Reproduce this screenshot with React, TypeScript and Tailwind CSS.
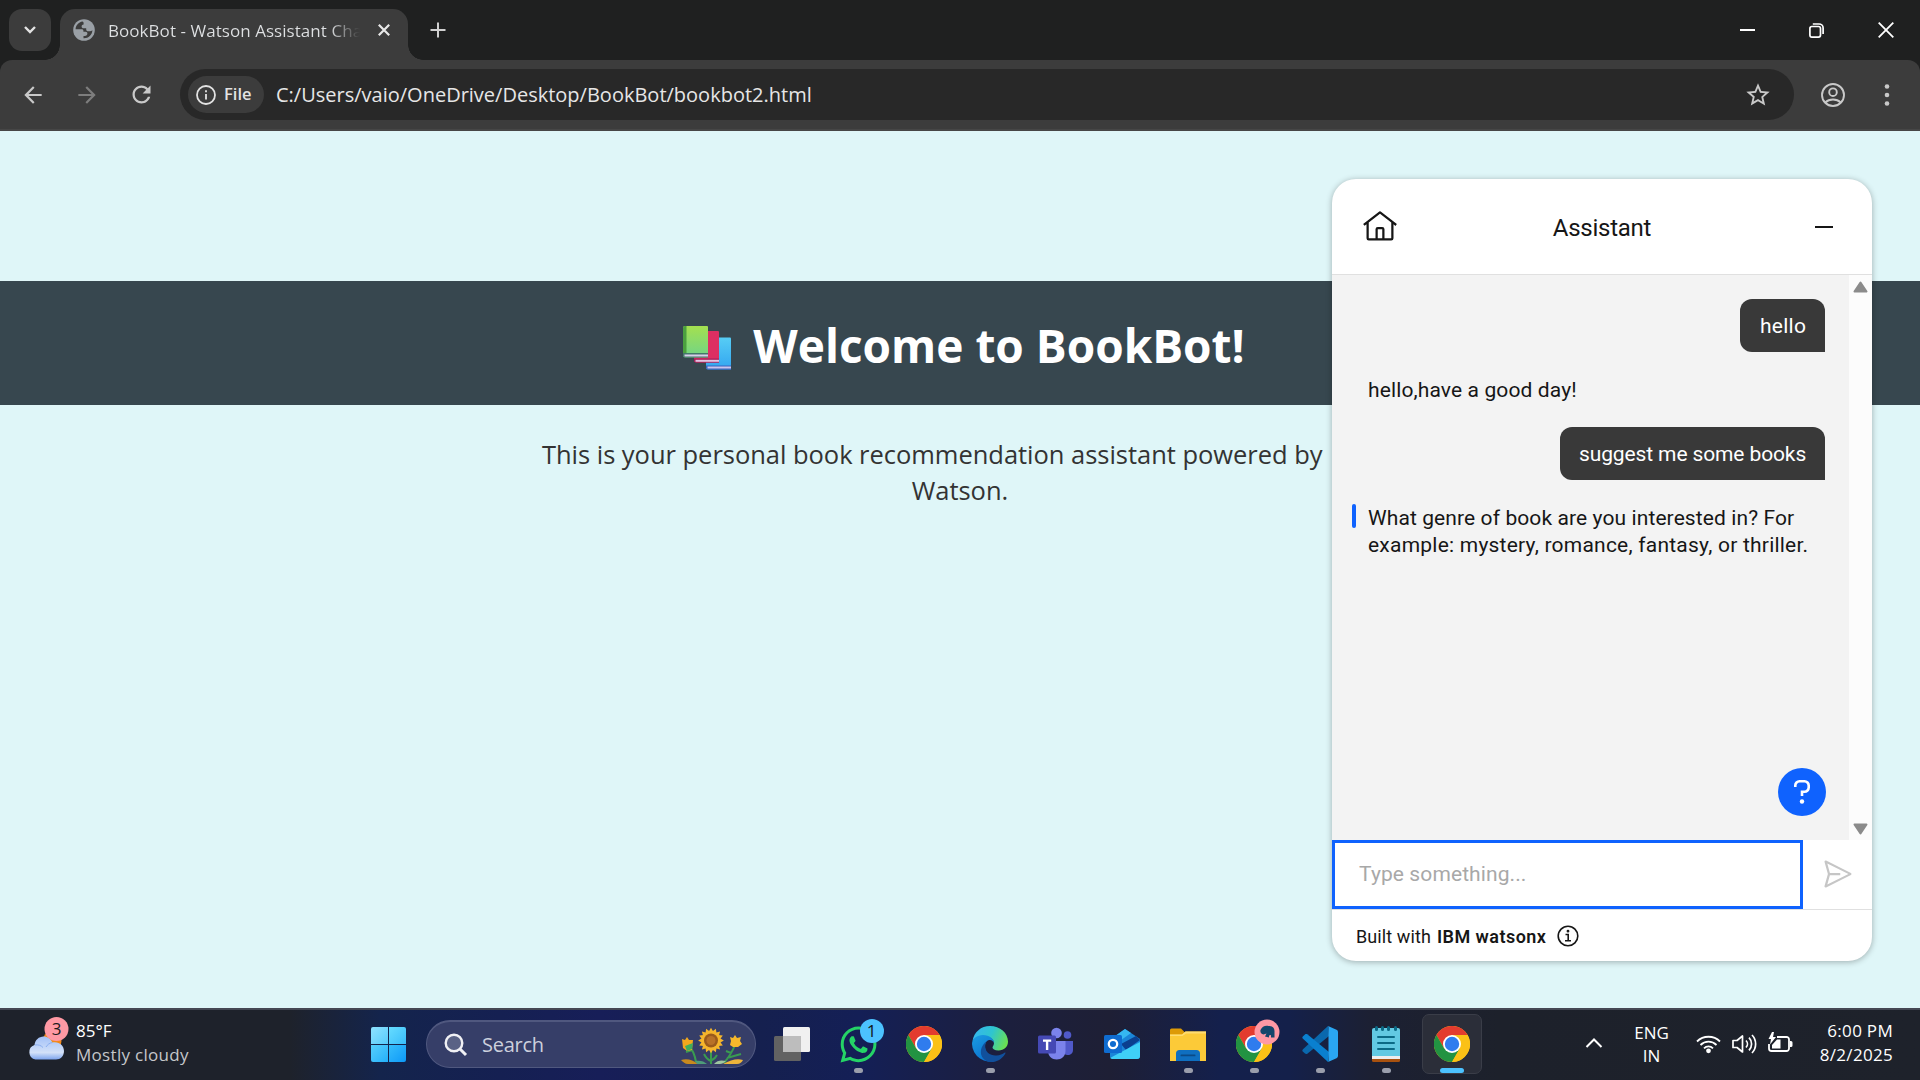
import React from "react";
import { FaWhatsapp } from "react-icons/fa";

function Globe() {
  return (
    <svg width="22" height="22" viewBox="0 0 22 22" className="shrink-0">
      <circle cx="11" cy="11" r="10.8" fill="#9aa0a6" />
      <path
        d="M9.5 2.6C5.6 3.2 2.7 6.5 2.6 10.3h6.2c.9 0 1.6.6 1.6 1.5v1h2.300c1.100 0 1.700.7 1.700 1.700 0 1.600-1 2.500-2.600 2.500H10.500v2.300c4.700.3 8.700-3.300 8.900-8-.8.7-1.500 1-2.500 1h-1.600c-1.300 0-2.100-.8-2.100-2.100v-.9H10.600C9.300 9.300 8.600 8.600 8.600 7.500c0-1.300.8-2 2-2V4c0-.7-.4-1.200-1.100-1.400z"
        fill="#3c3c3c"
      />
    </svg>
  );
}

function ChromeLogo() {
  return (
    <svg width="36" height="36" viewBox="0 0 36 36">
      <circle cx="18" cy="18" r="18" fill="#fbc116" />
      <path d="M2.400 9A18 18 0 0 1 33.600 9H18L10.200 22.500z" fill="#e33b2e" />
      <path d="M2.400 9A18 18 0 0 0 18 36L25.800 22.500H10.200z" fill="#229342" />
      <path d="M33.600 9A18 18 0 0 1 18 36L25.800 22.500 18 9z" fill="#fbc116" />
      <circle cx="18" cy="18" r="9" fill="#fff" />
      <circle cx="18" cy="18" r="7.200" fill="#2f7cee" />
    </svg>
  );
}

function EdgeLogo() {
  return (
    <svg width="36" height="36" viewBox="0 0 36 36">
      <defs>
        <linearGradient id="eTop" x1="0" y1=".3" x2="1" y2=".6">
          <stop offset="0" stopColor="#35b6ee" />
          <stop offset=".5" stopColor="#2fc5cf" />
          <stop offset="1" stopColor="#6be04f" />
        </linearGradient>
        <linearGradient id="eLeft" x1="0" y1="0" x2=".6" y2="1">
          <stop offset="0" stopColor="#1b9de2" />
          <stop offset="1" stopColor="#0a70cf" />
        </linearGradient>
      </defs>
      <path d="M0.500 15C2 6 9 0 18 0c10 0 18 7 18 15.500 0 5.500-4 9-9.500 9-4 0-6-1.500-6-3 0-1 1.500-2 1.500-4.500 0-3.500-4-6.500-9-6.500C7.500 10.500 2.500 12 0.500 15z" fill="url(#eTop)" />
      <path d="M0 18c0-5.500 5-9 11-9 6.500 0 11 4 11 8-1-2.500-3-3.500-5-3-3.500 1-5 5-3.500 10 1.500 5.500 5.500 9.500 11 10.300A18 18 0 0 1 0 18z" fill="url(#eLeft)" />
      <path d="M13.200 20c-.3 6 5.300 10 11.300 9.500 3.500-.3 6-1.500 8-2.800 1-.5 1.200.3.700 1C30 33 25 36 19.500 36 12 36 8 30 9 24c.5-3.500 3-7 6-9-1.200 1.300-1.700 3-1.800 5z" fill="#11509c" />
    </svg>
  );
}

function TeamsLogo() {
  return (
    <svg width="36" height="34" viewBox="0 0 36 34">
      <circle cx="29.500" cy="8" r="3.800" fill="#5059c9" />
      <path d="M25 14h10v9c0 3.500-2.500 5-5 5s-5-1-5-5z" fill="#5059c9" />
      <circle cx="18.500" cy="6" r="5.300" fill="#7b83eb" />
      <path d="M10 14h17.500v10c0 5-4 8.500-8.800 8.500S10 29 10 24z" fill="#7b83eb" />
      <rect x="0" y="8.500" width="18" height="18" rx="1.500" fill="#4549b4" />
      <path d="M5 12.500h8.200v2.200h-2.900V23H7.900v-8.300H5z" fill="#fff" />
    </svg>
  );
}

function OutlookLogo() {
  return (
    <svg width="36" height="32" viewBox="0 0 36 32">
      <path d="M6 12L21 1l15 10v17a3 3 0 0 1-3 3H9a3 3 0 0 1-3-3z" fill="#1a86d8" />
      <path d="M11 8L21 1l6 4-14 10z" fill="#35b8f1" />
      <path d="M17 16L32 8l4 4-14 10z" fill="#0b3f8f" />
      <path d="M6 30L36 14v14a3 3 0 0 1-3 3H8z" fill="#3fd0f7" />
      <rect x="0" y="7" width="18" height="18" rx="1.500" fill="#0f6cd0" />
      <circle cx="9" cy="16" r="4.200" fill="none" stroke="#fff" strokeWidth="2.300" />
    </svg>
  );
}

function FolderLogo() {
  return (
    <svg width="36" height="33" viewBox="0 0 36 33">
      <path d="M0 2a1.500 1.500 0 0 1 1.500-1.500H11l4 4V9H0z" fill="#dd9a06" />
      <path d="M0 6.500h12l3.500-3H36V33H0z" fill="#fcca38" />
      <path d="M0 6.500h12l3.500-3H36v2H16l-3.500 2.500H0z" fill="#ffdc70" />
      <path d="M6 33v-7.500A3.500 3.500 0 0 1 9.500 22h17a3.500 3.500 0 0 1 3.500 3.500V33z" fill="#0f6fc0" />
      <rect x="10.500" y="26.500" width="15" height="1.800" rx=".9" fill="#0b4a86" />
    </svg>
  );
}

function CodeLogo() {
  return (
    <svg width="36" height="36" viewBox="0 0 36 36">
      <path d="M26 0L1 23.200a1.800 1.800 0 0 0 0 2.600l2 1.800c.7.600 1.600.6 2.300.1L27 10z" fill="#0a68ad" />
      <path d="M26 36L1 12.800a1.800 1.800 0 0 1 0-2.600l2-1.800c.7-.6 1.600-.6 2.300-.1L27 26z" fill="#0a80cf" />
      <path d="M26 0l8.500 3.800A2.500 2.500 0 0 1 36 6v24a2.500 2.500 0 0 1-1.500 2.200L26 36c.6-.5.500-1.300.5-2V2c0-.7 0-1.500-.5-2z" fill="#2aa6f2" />
    </svg>
  );
}

function NotepadLogo() {
  return (
    <svg width="28" height="36" viewBox="0 0 28 36">
      <rect x="0" y="28" width="28" height="8" rx="1.500" fill="#a8510f" />
      <rect x="0" y="27" width="28" height="6" fill="#ededed" />
      <path d="M0 4a2 2 0 0 1 2-2h24a2 2 0 0 1 2 2v26H0z" fill="#62c9e2" />
      {[3, 9, 15, 22].map((x) => (
        <rect key={x} x={x} y="0" width="3" height="5" rx="1.500" fill="#0b6a86" />
      ))}
      {[10, 16, 22].map((y) => (
        <rect key={y} x="5" y={y} width="18" height="2" rx="1" fill="#0b6a86" />
      ))}
    </svg>
  );
}

function TaskViewLogo() {
  return (
    <svg width="36" height="34" viewBox="0 0 36 34">
      <rect x="0" y="9" width="27" height="25" rx="1.500" fill="#626262" />
      <rect x="9" y="0" width="27" height="25" rx="1.500" fill="#f0f0f0" />
      <rect x="9" y="9" width="18" height="16" fill="#bdbdbd" />
    </svg>
  );
}

function WeatherIcon() {
  return (
    <svg width="42" height="44" viewBox="0 0 42 44">
      <defs>
        <linearGradient id="cloud" x1="0" y1="0" x2="0" y2="1">
          <stop offset="0" stopColor="#a3c1f8" />
          <stop offset=".7" stopColor="#d3e1f8" />
          <stop offset="1" stopColor="#7ea5ee" />
        </linearGradient>
      </defs>
      <circle cx="25" cy="24" r="9.500" fill="#f28a1c" />
      <path d="M8.500 42.500a7.500 7.500 0 0 1-1-14.500C8 23 12 19.500 16.500 19.500c4 0 7.500 2.500 8.800 6C31.500 24 37 28 37 34c0 5-3.500 8.500-8 8.500z" fill="url(#cloud)" />
      <path d="M8 28c3-.6 6 .3 8 2.500M19 30c1.500-2.500 3.500-4 6.300-4.500" stroke="#8aaef0" strokeWidth="1" fill="none" />
      <circle cx="29.500" cy="12" r="12" fill="#ff99a4" />
      <text x="29.500" y="18" textAnchor="middle" fontSize="17" fill="#1c1c1c" fontFamily="Open Sans, sans-serif">3</text>
    </svg>
  );
}

function Sunflowers() {
  return (
    <svg width="62" height="38" viewBox="0 0 62 38">
      <path d="M30 24v13M30 34c-3-1-5-3-7-7M31 33c2-1 4-3 5-5M8 19c4 4 6 10 7 16M54 18c-2 5-6 12-11 18M11 23l-6 2M46 31l14-4M50 26l-5-2" stroke="#3a9b50" strokeWidth="2" fill="none" />
      <path d="M0 33c6-2 12 0 17 4H7c-3 0-5-2-7-4z" fill="#c98a1e" />
      <path d="M62 33c-6-2-12 0-20 4h14c3 0 5-2 6-4z" fill="#edb43a" />
      <path d="M14 34c5-1 9 0 12 3H16z" fill="#4e9c79" />
      <path d="M33 37c3-4 8-4 12-3-2 2-4 3-6 3z" fill="#9fc6a0" />
      <path d="M1 12l3 1 2-3 2 3 4 0-1 10-5 1-4-3z" fill="#f2a81d" />
      <path d="M4 19l8-3-1 6-5 2z" fill="#3fae5c" />
      <path d="M49 10l3 1 2-3 2 3 4-1-1 4 2 3-4 3H52l-3-2 1-4z" fill="#f7b92b" />
      <g transform="translate(30 13.500)">
        {[0, 22.5, 45, 67.5, 90, 112.5, 135, 157.5].map((a) => (
          <path key={a} transform={`rotate(${a})`} d="M0-12.800L3.400-7V7L0 12.800-3.400 7V-7z" fill="#f5b52c" />
        ))}
        <circle r="7" fill="#9a5a1c" />
        <circle r="4.500" fill="#b87128" />
      </g>
    </svg>
  );
}

function Books() {
  return (
    <svg width="50" height="44" viewBox="0 0 50 44">
      <defs>
        <linearGradient id="green" x1="0" y1="0" x2="0" y2="1">
          <stop offset="0" stopColor="#a4e04f" />
          <stop offset="1" stopColor="#70d488" />
        </linearGradient>
        <linearGradient id="blue" x1="0" y1="0" x2="0" y2="1">
          <stop offset="0" stopColor="#57cdf5" />
          <stop offset="1" stopColor="#32a5f0" />
        </linearGradient>
      </defs>
      <path d="M23 13a1.500 1.500 0 0 1 1.500-1.500H47a1 1 0 0 1 1 1V43.500H25a2 2 0 0 1-2-2z" fill="url(#blue)" />
      <path d="M23 39.500h25v4H25a2 2 0 0 1-2-2z" fill="#3b62bf" />
      <rect x="24.500" y="40.500" width="23.500" height="2" fill="#c9c4ec" />
      <path d="M11 7a2 2 0 0 1 2-2h22a1 1 0 0 1 1 1v30.500H13.500A2.500 2.500 0 0 1 11 34z" fill="#dd2f62" />
      <path d="M11 32.500h25v4H13.500A2.500 2.500 0 0 1 11 34z" fill="#a81d58" />
      <rect x="12.500" y="33.800" width="23.500" height="2" fill="#e3c4e4" />
      <path d="M0 2a2 2 0 0 1 2-2h22a1 1 0 0 1 1 1v30.500H2.500A2.500 2.500 0 0 1 0 29z" fill="url(#green)" />
      <path d="M0 2a2 2 0 0 1 2-2h1.500v28H0z" fill="#4ba03f" />
      <path d="M0 27h25v4.500H2.500A2.500 2.500 0 0 1 0 29z" fill="#44786a" />
      <rect x="1.500" y="28.500" width="23.500" height="2" fill="#d9cdea" />
    </svg>
  );
}

function BrowserChrome() {
  return (
    <header className="flex h-[131px] flex-col bg-[#1f2020]">
      <div className="flex h-[60px] items-stretch">
        <div className="flex w-[60px] flex-col">
          <button className="mt-[9px] ml-[9px] flex h-[42px] w-[42px] shrink-0 items-center justify-center rounded-[13px] bg-[#3c3c3c]">
            <svg width="12" height="8" viewBox="0 0 12 8"><path d="M1 1l5 5 5-5" fill="none" stroke="#e3e3e3" strokeWidth="2.400" /></svg>
          </button>
        </div>
        <div className="relative mt-[9px] flex w-[348px] items-center rounded-t-[15px] bg-[#3c3c3c] pr-[18px] pb-[9px] pl-[13px]">
          <span className="absolute bottom-0 -left-[15px] h-[15px] w-[15px] bg-[radial-gradient(circle_at_0_0,transparent_14.5px,#3c3c3c_15px)]" />
          <span className="absolute -right-[15px] bottom-0 h-[15px] w-[15px] bg-[radial-gradient(circle_at_100%_0,transparent_14.5px,#3c3c3c_15px)]" />
          <Globe />
          <span className="mt-[2px] ml-[13px] w-[252px] overflow-hidden bg-gradient-to-r from-[#dfe1e3] from-88% to-[#3c3c3c] to-100% bg-clip-text text-[17px] tracking-[0.050px] whitespace-nowrap text-transparent">
            BookBot - Watson Assistant Cha
          </span>
          <svg width="12" height="12" viewBox="0 0 12 12" className="ml-auto"><path d="M.8.8l10.400 10.400M11.200.8L.8 11.200" stroke="#e8e8e8" strokeWidth="2.200" /></svg>
        </div>
        <div className="flex w-[60px] items-center justify-center">
          <svg width="16" height="16" viewBox="0 0 16 16"><path d="M8 .5v15M.5 8h15" stroke="#d0d0d0" strokeWidth="2" /></svg>
        </div>
        <div className="ml-auto flex items-center">
          <div className="flex w-[69px] justify-center">
            <svg width="15" height="15" viewBox="0 0 15 15"><path d="M0 7h15" stroke="#fff" strokeWidth="2" /></svg>
          </div>
          <div className="flex w-[69px] justify-center">
            <svg width="15" height="15" viewBox="0 0 15 15" fill="none" stroke="#fff" strokeWidth="1.700">
              <rect x=".9" y="3.500" width="10.600" height="10.600" rx="2" />
              <path d="M3.800 1H10a4.100 4.100 0 0 1 4.100 4.100V11" />
            </svg>
          </div>
          <div className="flex w-[69px] justify-center">
            <svg width="16" height="16" viewBox="0 0 16 16"><path d="M.7.7l14.600 14.600M15.300.7L.7 15.300" stroke="#fff" strokeWidth="1.800" /></svg>
          </div>
        </div>
      </div>

      <div className="flex h-[71px] items-start rounded-t-[12px] border-b-2 border-[#464646] bg-[#3c3c3c] pt-[9px]">
        <div className="flex h-[51px] w-[180px] items-center pl-[6px]">
          <div className="flex w-[54px] justify-center">
            <svg width="26" height="26" viewBox="0 0 24 24" fill="#c9c9c9"><path d="M20 11H7.830l5.590-5.590L12 4l-8 8 8 8 1.410-1.410L7.830 13H20v-2z" /></svg>
          </div>
          <div className="flex w-[54px] justify-center">
            <svg width="26" height="26" viewBox="0 0 24 24" fill="#7d7d7d"><path d="M4 11h12.170l-5.590-5.590L12 4l8 8-8 8-1.410-1.410L16.170 13H4v-2z" /></svg>
          </div>
          <div className="flex w-[54px] justify-center">
            <svg width="27" height="27" viewBox="0 0 24 24" fill="#c9c9c9"><path d="M17.650 6.350C16.200 4.900 14.210 4 12 4c-4.420 0-7.990 3.580-7.990 8s3.570 8 7.990 8c3.730 0 6.840-2.550 7.730-6h-2.080c-.82 2.330-3.040 4-5.650 4-3.310 0-6-2.690-6-6s2.690-6 6-6c1.660 0 3.140.69 4.220 1.780L13 11h7V4l-2.350 2.350z" /></svg>
          </div>
        </div>
        <div className="flex h-[51px] w-[1614px] items-center rounded-full bg-[#282828] pl-2">
          <div className="flex h-[37px] w-[76px] items-center rounded-full bg-[#3c3c3c] pl-2">
            <svg width="20" height="20" viewBox="0 0 20 20" fill="none" stroke="#e3e3e3" strokeWidth="1.800">
              <circle cx="10" cy="10" r="9" />
              <path d="M10 9v5.500M10 5.300v2" />
            </svg>
            <span className="ml-2 text-[16.500px] font-semibold text-[#e3e3e3]">File</span>
          </div>
          <span className="ml-[12px] text-[20px] text-[#e6e6e6]">C:/Users/vaio/OneDrive/Desktop/BookBot/bookbot2.html</span>
          <svg width="28" height="28" viewBox="0 0 24 24" fill="#c9c9c9" className="mr-[22px] ml-auto"><path d="M22 9.240l-7.190-.62L12 2 9.190 8.630 2 9.240l5.460 4.730L5.820 21 12 17.270 18.180 21l-1.630-7.030L22 9.240zM12 15.400l-3.760 2.270 1-4.280-3.320-2.880 4.380-.38L12 6.100l1.710 4.040 4.380.38-3.320 2.880 1 4.280L12 15.400z" /></svg>
        </div>
        <div className="flex h-[51px] flex-1 items-center pl-[27px]">
          <svg width="24" height="24" viewBox="0 0 24 24" fill="none" stroke="#c9c9c9" strokeWidth="1.900">
            <circle cx="12" cy="12" r="11" />
            <circle cx="12" cy="9.200" r="3.800" />
            <path d="M4.300 19.500c2-2 4.800-3 7.700-3s5.700 1 7.700 3" />
          </svg>
          <svg width="6" height="24" viewBox="0 0 6 24" fill="#c9c9c9" className="ml-[39px]">
            <circle cx="3" cy="3.500" r="2.300" /><circle cx="3" cy="12" r="2.300" /><circle cx="3" cy="20.500" r="2.300" />
          </svg>
        </div>
      </div>
    </header>
  );
}

function ChatWidget() {
  return (
    <section className="absolute top-[48px] left-[1332px] flex h-[782px] w-[540px] flex-col overflow-hidden rounded-[24px] bg-white font-[Roboto,sans-serif] text-[#161616] shadow-[0_1px_6px_rgba(0,0,0,0.3)]">
      <div className="flex h-[96px] shrink-0 items-center border-b border-[#e0e0e0] pr-[39px] pl-[30px]">
        <svg width="36" height="36" viewBox="0 0 32 32" fill="#161616"><path d="M16.612 2.214a1.010 1.010 0 0 0-1.243 0L1 13.419l1.243 1.572L4 13.621V26a2.004 2.004 0 0 0 2 2H26a2.004 2.004 0 0 0 2-2V13.630L29.757 15 31 13.428zM18 26H14V18h4zm2 0V18a2.002 2.002 0 0 0-2-2H14a2.002 2.002 0 0 0-2 2v8H6V12.062l10-7.790 10 7.800V26z" /></svg>
        <h2 className="flex-1 pt-[2px] pr-[9px] text-center text-[24px] tracking-[-0.250px]">Assistant</h2>
        <span className="h-[2px] w-[18px] bg-[#161616]" />
      </div>
      <div className="flex min-h-0 flex-1">
        <div className="relative w-[517px] bg-[#f3f3f3] pt-[24px] pr-[24px] text-[21px] leading-[27px]">
          <div className="flex justify-end">
            <p className="w-[85px] rounded-[12px] rounded-br-none bg-[#393939] pt-[14px] pb-[12px] pl-[20px] tracking-[0.250px] text-white">hello</p>
          </div>
          <p className="mt-[25px] pl-[36px] tracking-[0.120px]">hello,have a good day!</p>
          <div className="mt-[23px] flex justify-end">
            <p className="w-[265px] rounded-[12px] rounded-br-none bg-[#393939] pt-[14px] pb-[12px] pl-[19px] tracking-[-0.120px] whitespace-nowrap text-white">suggest me some books</p>
          </div>
          <div className="mt-[24px] flex">
            <span className="ml-[20px] h-[24px] w-[4px] rounded-full bg-[#0f62fe]" />
            <p className="mt-px ml-[12px] whitespace-nowrap">
              <span className="block tracking-[0.100px]">What genre of book are you interested in? For</span>
              <span className="block tracking-[0.225px]">example: mystery, romance, fantasy, or thriller.</span>
            </p>
          </div>
          <button className="absolute right-[23px] bottom-[24px] flex h-[48px] w-[48px] items-center justify-center rounded-full bg-[#0f62fe]">
            <svg width="16" height="24" viewBox="0 0 16 24" fill="none">
              <path d="M1.300 7V5.500A4.200 4.200 0 0 1 5.500 1.300h5A4.200 4.200 0 0 1 14.700 5.500v2A4.200 4.200 0 0 1 10.500 11.700H8V16" stroke="#fff" strokeWidth="2.600" />
              <circle cx="8" cy="21.500" r="2.200" fill="#fff" />
            </svg>
          </button>
        </div>
        <div className="flex flex-1 flex-col items-center justify-between bg-[#fcfcfc] pt-[6px] pb-[5px]">
          <svg width="15" height="12" viewBox="0 0 15 12"><path d="M7.500 1.500L13.500 10.500H1.500z" fill="#8b8b8b" stroke="#8b8b8b" strokeWidth="2" strokeLinejoin="round" /></svg>
          <svg width="15" height="12" viewBox="0 0 15 12"><path d="M7.500 10.500L13.500 1.500H1.500z" fill="#8b8b8b" stroke="#8b8b8b" strokeWidth="2" strokeLinejoin="round" /></svg>
        </div>
      </div>
      <div className="flex h-[70px] shrink-0 border-b border-[#e0e0e0]">
        <div className="flex w-[471px] items-center border-[3px] border-[#0f62fe] pt-px pl-[24px] text-[21px] tracking-[0.100px] text-[#a8a8a8]">Type something...</div>
        <div className="flex flex-1 items-center justify-center pb-px">
          <svg width="36" height="36" viewBox="0 0 32 32" fill="#c6c6c6"><path d="M27.450 15.110l-22-11a1 1 0 0 0-1.080.12 1 1 0 0 0-.33 1L7 16 4 26.740A1 1 0 0 0 5 28a1 1 0 0 0 .45-.11l22-11a1 1 0 0 0 0-1.780zM6.500 25.400L8.800 17H18V15H8.800L6.500 6.600 25.300 16z" /></svg>
        </div>
      </div>
      <div className="flex h-[51px] shrink-0 items-center pt-px pl-[24px] text-[18px]">
        <span className="tracking-[0.100px]">Built with</span>
        <span className="ml-[6px] font-semibold tracking-[0.450px]">IBM watsonx</span>
        <svg width="22" height="22" viewBox="0 0 22 22" fill="none" stroke="#161616" strokeWidth="1.600" className="mb-px ml-[11px]">
          <circle cx="11" cy="11" r="9.800" />
          <path d="M8.500 9.500h2.700v6M8 15.800h6" />
          <circle cx="11" cy="6.200" r=".6" fill="#161616" />
        </svg>
      </div>
    </section>
  );
}

function TaskItem({ children, running, active }: { children: React.ReactNode; running?: boolean; active?: boolean }) {
  return (
    <div className="relative flex h-full w-[66px] items-center justify-center">
      {active && <span className="absolute top-[4px] left-[3px] h-[60px] w-[60px] rounded-[7px] border border-[#3a3d48] bg-[#2b2e39]" />}
      <div className="relative mb-[2px]">{children}</div>
      {running && <span className="absolute top-[58px] left-[29px] h-[5px] w-[9px] rounded-full bg-[#9a9eac]" />}
      {active && <span className="absolute top-[58px] left-[21px] h-[5px] w-[24px] rounded-full bg-[#4cc2ff]" />}
    </div>
  );
}

function Taskbar() {
  return (
    <footer className="flex h-[72px] items-stretch border-t-2 border-[#454854] bg-[linear-gradient(90deg,#1e222b_0px,#1e222b_290px,#14244c_380px,#152052_500px,#171e58_600px,#15204f_760px,#141f56_860px,#1c1f3e_1000px,#1e1f35_1110px,#14204c_1220px,#14204a_1290px,#1c2033_1370px,#1d212b_1500px,#1e222b_1920px)]">
      <div className="flex w-[371px] pt-[7px] pl-[27px] text-[17px] leading-[24px] text-white">
        <WeatherIcon />
        <div className="mt-[2px] ml-[7px]">
          <p>85°F</p>
          <p className="tracking-[0.300px] text-[#c5c7ca]">Mostly cloudy</p>
        </div>
      </div>
      <div className="mt-[17px] grid h-[35px] w-[35px] grid-cols-2 gap-[1px] overflow-hidden rounded-[2px]">
        <span className="bg-gradient-to-br from-[#8ee2ff] to-[#55cbfb]" />
        <span className="bg-gradient-to-br from-[#66dcff] to-[#37bdfb]" />
        <span className="bg-gradient-to-br from-[#55cffd] to-[#21b0fa]" />
        <span className="bg-gradient-to-br from-[#35bdfb] to-[#0a99f8]" />
      </div>
      <div className="mt-[10px] mr-[3px] ml-[20px] flex h-[48px] w-[330px] items-center rounded-full border border-t-2 border-[#50587f] bg-[#363e68] pr-[12px] pl-[17px]">
        <svg width="24" height="24" viewBox="0 0 24 24" fill="none" stroke="#f0f0f4" strokeWidth="2.400">
          <circle cx="10" cy="10" r="8.300" fill="#5a6285" /><path d="M16 16l6 6" strokeWidth="3" />
        </svg>
        <span className="ml-[14px] text-[20px] tracking-[-0.250px] text-[#ccd0dd]">Search</span>
        <span className="mt-[3px] ml-auto"><Sunflowers /></span>
      </div>
      <TaskItem><TaskViewLogo /></TaskItem>
      <TaskItem running>
        <FaWhatsapp size={41} color="#25d366" className="-m-[2px]" />
        <span className="absolute -top-[7px] left-[20px] flex h-[24px] w-[24px] items-center justify-center rounded-full bg-[#4cc2ff] text-[17px] text-[#101820]">1</span>
      </TaskItem>
      <TaskItem><ChromeLogo /></TaskItem>
      <TaskItem running><EdgeLogo /></TaskItem>
      <TaskItem><TeamsLogo /></TaskItem>
      <TaskItem><OutlookLogo /></TaskItem>
      <TaskItem running><FolderLogo /></TaskItem>
      <TaskItem running>
        <ChromeLogo />
        <svg width="26" height="26" viewBox="0 0 26 26" className="absolute -top-[7px] left-[18px]">
          <circle cx="13" cy="13" r="12.500" fill="#ff99a4" />
          <path d="M6.500 11c1.500-3.500 5-5 8-4 3.500-.5 6 1.500 6 5v6.500h-3.500v-2.500l-2 .5v2l-4-1 1.500-3-3 1c-2.500-.5-3.500-2.500-3-4.500z" fill="#16466b" />
        </svg>
      </TaskItem>
      <TaskItem running><CodeLogo /></TaskItem>
      <TaskItem running><NotepadLogo /></TaskItem>
      <TaskItem active><ChromeLogo /></TaskItem>

      <div className="ml-auto flex items-start pr-[27px] text-[17px] leading-[24px] text-white">
        <svg width="18" height="12" viewBox="0 0 18 12" className="mt-[27px]"><path d="M1.500 10L9 2.500 16.500 10" fill="none" stroke="#fff" strokeWidth="2" /></svg>
        <div className="mt-[11px] ml-[31px] w-[35px] text-center leading-[23px]"><p>ENG</p><p>IN</p></div>
        <svg width="25" height="20" viewBox="0 0 25 20" fill="none" stroke="#fff" strokeWidth="1.800" className="mt-[24px] ml-[27px]">
          <path d="M1 7.500a16.300 16.300 0 0 1 23 0M4.500 11a11.300 11.300 0 0 1 16 0M8 14.300a6.400 6.400 0 0 1 9 0" />
          <circle cx="12.500" cy="16.800" r="1.500" fill="#fff" />
        </svg>
        <svg width="25" height="22" viewBox="0 0 25 22" fill="none" stroke="#fff" strokeWidth="1.700" strokeLinejoin="round" className="mt-[23px] ml-[11px]">
          <path d="M1 7.500h4L10.500 3v16L5 14.500H1z" />
          <path d="M14 7.500a5 5 0 0 1 0 7M17 4.700a9 9 0 0 1 0 12.600M20 2a13 13 0 0 1 0 18" />
        </svg>
        <svg width="25" height="22" viewBox="0 0 25 22" fill="none" className="mt-[22px] ml-[11px]">
          <path d="M9 5h9.500A2.500 2.500 0 0 1 21 7.500v9a2.500 2.500 0 0 1-2.500 2.500h-15A2.500 2.500 0 0 1 1 16.500V12" stroke="#fff" strokeWidth="1.800" />
          <path d="M22 9h1a1.500 1.500 0 0 1 1.500 1.500v3A1.500 1.500 0 0 1 23 15h-1zM9 7.500h3.500v9H4V13z" fill="#fff" />
          <path d="M4 0L.5 7H3L2 12.500 8 5H5L6 0z" fill="#fff" />
        </svg>
        <div className="mt-[9px] ml-[24px] w-[76px] text-right tracking-[0.300px]"><p>6:00 PM</p><p>8/2/2025</p></div>
      </div>
    </footer>
  );
}

export default function App() {
  return (
    <div className="flex h-[1080px] w-[1920px] flex-col overflow-hidden font-[Open_Sans,sans-serif]">
      <BrowserChrome />
      <main className="relative h-[877px] bg-[#dff6f8] pt-[150px]">
        <div className="flex h-[124px] items-center justify-center gap-[20px] bg-[#37474f] pt-[5px] pl-[8px] text-white">
          <span className="mt-[4px]"><Books /></span>
          <h1 className="text-[46px] font-bold">Welcome to BookBot!</h1>
        </div>
        <div className="mt-[31px] text-[25.500px] leading-[36px] tracking-[-0.030px] text-[#333]">
          <p className="pl-[542px] whitespace-nowrap">This is your personal book recommendation assistant powered by</p>
          <p className="text-center">Watson.</p>
        </div>
        <ChatWidget />
      </main>
      <Taskbar />
    </div>
  );
}
